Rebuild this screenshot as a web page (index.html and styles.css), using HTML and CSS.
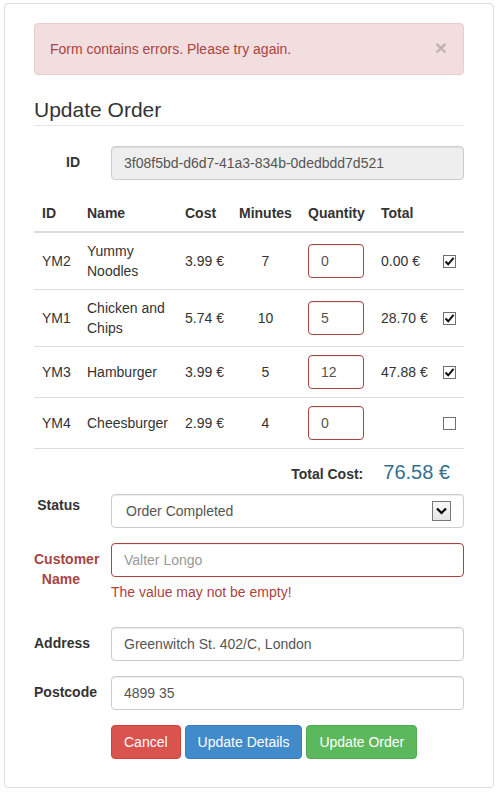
FILE: index.html
```html
<!DOCTYPE html>
<html>
<head>
<meta charset="utf-8">
<title>Update Order</title>
<link rel="stylesheet" href="styles.css">
</head>
<body>
<div class="panel">
  <div class="alert">
    <span>Form contains errors. Please try again.</span>
    <span class="close">×</span>
  </div>
  <h3 class="legend">Update Order</h3>

  <div class="form-group">
    <label class="control-label">ID</label>
    <div class="control"><input class="form-control readonly" type="text" value="3f08f5bd-d6d7-41a3-834b-0dedbdd7d521" readonly></div>
  </div>

  <table class="items">
    <colgroup>
      <col class="c-id"><col class="c-name"><col class="c-cost"><col class="c-min"><col class="c-qty"><col class="c-total"><col class="c-chk">
    </colgroup>
    <thead>
      <tr><th>ID</th><th>Name</th><th>Cost</th><th>Minutes</th><th>Quantity</th><th>Total</th><th></th></tr>
    </thead>
    <tbody>
      <tr>
        <td>YM2</td><td class="name">Yummy Noodles</td><td>3.99 €</td><td class="center">7</td>
        <td><input class="qty" type="text" value="0"></td><td>0.00 €</td>
        <td><span class="chk"><svg viewBox="0 0 13 13" width="13" height="13"><path d="M2.5 6.5 L5.2 9.3 L10.6 2.8" fill="none" stroke="#111" stroke-width="2"/></svg></span></td>
      </tr>
      <tr>
        <td>YM1</td><td class="name">Chicken and Chips</td><td>5.74 €</td><td class="center">10</td>
        <td><input class="qty" type="text" value="5"></td><td>28.70 €</td>
        <td><span class="chk"><svg viewBox="0 0 13 13" width="13" height="13"><path d="M2.5 6.5 L5.2 9.3 L10.6 2.8" fill="none" stroke="#111" stroke-width="2"/></svg></span></td>
      </tr>
      <tr>
        <td>YM3</td><td class="name">Hamburger</td><td>3.99 €</td><td class="center">5</td>
        <td><input class="qty" type="text" value="12"></td><td>47.88 €</td>
        <td><span class="chk"><svg viewBox="0 0 13 13" width="13" height="13"><path d="M2.5 6.5 L5.2 9.3 L10.6 2.8" fill="none" stroke="#111" stroke-width="2"/></svg></span></td>
      </tr>
      <tr>
        <td>YM4</td><td class="name nowrap">Cheesburger</td><td>2.99 €</td><td class="center">4</td>
        <td><input class="qty" type="text" value="0"></td><td></td>
        <td><span class="chk"></span></td>
      </tr>
    </tbody>
  </table>

  <div class="total-row">
    <span class="total-label">Total Cost:</span>
    <span class="total-value">76.58 €</span>
  </div>

  <div class="form-group">
    <label class="control-label status-label">Status</label>
    <div class="control">
      <div class="form-control select">
        <span>Order Completed</span>
        <span class="arrow"><svg viewBox="0 0 17 18" width="17" height="18"><path d="M4 6.5 L8.5 11 L13 6.5" fill="none" stroke="#000" stroke-width="2.2"/></svg></span>
      </div>
    </div>
  </div>

  <div class="form-group has-error">
    <label class="control-label">Customer Name</label>
    <div class="control">
      <input class="form-control" type="text" value="" placeholder="Valter Longo">
      <div class="help-block">The value may not be empty!</div>
    </div>
  </div>

  <div class="form-group">
    <label class="control-label">Address</label>
    <div class="control"><input class="form-control" type="text" value="Greenwitch St. 402/C, London"></div>
  </div>

  <div class="form-group">
    <label class="control-label">Postcode</label>
    <div class="control"><input class="form-control" type="text" value="4899 35"></div>
  </div>

  <div class="buttons">
    <button class="btn btn-danger" type="button">Cancel</button>
    <button class="btn btn-primary" type="button">Update Details</button>
    <button class="btn btn-success" type="button">Update Order</button>
  </div>
</div>
</body>
</html>
```

FILE: styles.css
```css
* { box-sizing: border-box; }

html, body {
  margin: 0;
  padding: 0;
  background: #fff;
}

body {
  font-family: "Liberation Sans", Arial, Helvetica, sans-serif;
  font-size: 14px;
  line-height: 20px;
  color: #333;
}

.panel {
  margin: 3px 4px 0 4px;
  border: 1px solid #ddd;
  border-radius: 4px;
  padding: 19px 29px 28px 29px;
}

.alert {
  display: flex;
  justify-content: space-between;
  align-items: center;
  padding: 15px;
  background: #f2dede;
  border: 1px solid #ebccd1;
  border-radius: 4px;
  color: #a94442;
  margin-bottom: 20px;
}

.close {
  font-size: 21px;
  font-weight: bold;
  line-height: 20px;
  color: #000;
  opacity: 0.2;
  margin-right: 1px;
  margin-top: -3px;
}

.legend {
  margin: 0 0 20px 0;
  font-size: 21px;
  font-weight: normal;
  line-height: 30px;
  color: #333;
  border-bottom: 1px solid #e5e5e5;
}

.form-group {
  display: flex;
  align-items: flex-start;
  margin-bottom: 15px;
}

.control-label {
  width: 46px;
  flex: none;
  margin-right: 31px;
  padding-top: 6px;
  font-weight: bold;
  text-align: right;
}

.status-label {
  padding-top: 1px;
}

.control {
  flex: 1;
  min-width: 0;
}

.form-control {
  display: block;
  width: 100%;
  height: 34px;
  padding: 6px 12px;
  font-family: inherit;
  font-size: 14px;
  line-height: 20px;
  color: #555;
  background: #fff;
  border: 1px solid #ccc;
  border-radius: 4px;
  box-shadow: inset 0 1px 1px rgba(0,0,0,0.075);
  margin: 0;
}

.form-control::placeholder {
  color: #999;
}

.readonly {
  background: #eee;
}

.has-error .control-label,
.has-error .help-block {
  color: #a94442;
}

.has-error .form-control {
  border-color: #a94442;
}

.help-block {
  margin-top: 5px;
  margin-bottom: 10px;
}

.select {
  display: flex;
  align-items: center;
  justify-content: space-between;
  padding: 5px 12px 5px 14px;
}

.arrow {
  display: flex;
  align-items: center;
  justify-content: center;
  width: 19px;
  height: 20px;
  border: 1px solid #777;
  background: linear-gradient(#f8f8f8, #e6e6e6);
}

.items {
  width: 430px;
  table-layout: fixed;
  border-collapse: collapse;
  border-spacing: 0;
}

.c-id { width: 45px; }
.c-name { width: 98px; }
.c-cost { width: 54px; }
.c-min { width: 69px; }
.c-qty { width: 73px; }
.c-total { width: 62px; }
.c-chk { width: 29px; }

.items th {
  padding: 8px;
  text-align: left;
  font-weight: bold;
  white-space: nowrap;
  vertical-align: bottom;
  border-bottom: 2px solid #ddd;
}

.items td {
  padding: 8px;
  vertical-align: middle;
  white-space: nowrap;
  border-bottom: 1px solid #ddd;
}

.items td.name {
  white-space: normal;
}

.items td.name.nowrap {
  white-space: nowrap;
}

.items td.center {
  text-align: center;
}

.qty {
  display: block;
  width: 56px;
  height: 34px;
  padding: 6px 12px;
  font-family: inherit;
  font-size: 14px;
  line-height: 20px;
  color: #555;
  border: 1px solid #a94442;
  border-radius: 4px;
  box-shadow: inset 0 1px 1px rgba(0,0,0,0.075);
  margin: 0;
}

.chk {
  display: block;
  width: 13px;
  height: 13px;
  border: 1px solid #707070;
  background: #fff;
  position: relative;
}

.chk svg {
  position: absolute;
  left: -1px;
  top: -1px;
}

.total-row {
  display: flex;
  justify-content: flex-end;
  align-items: baseline;
  gap: 20px;
  padding: 13px 14px 0 0;
  height: 45px;
}

.total-label {
  font-weight: bold;
}

.total-value {
  font-size: 20px;
  color: #31708f;
}

.buttons {
  display: flex;
  gap: 4px;
  margin-left: 77px;
}

.btn {
  display: inline-block;
  height: 34px;
  padding: 6px 12px;
  font-family: inherit;
  font-size: 14px;
  line-height: 20px;
  color: #fff;
  border: 1px solid transparent;
  border-radius: 4px;
  margin: 0;
  cursor: pointer;
}

.btn-danger {
  background: #d9534f;
  border-color: #d43f3a;
}

.btn-primary {
  background: #428bca;
  border-color: #357ebd;
}

.btn-success {
  background: #5cb85c;
  border-color: #4cae4c;
}
```
